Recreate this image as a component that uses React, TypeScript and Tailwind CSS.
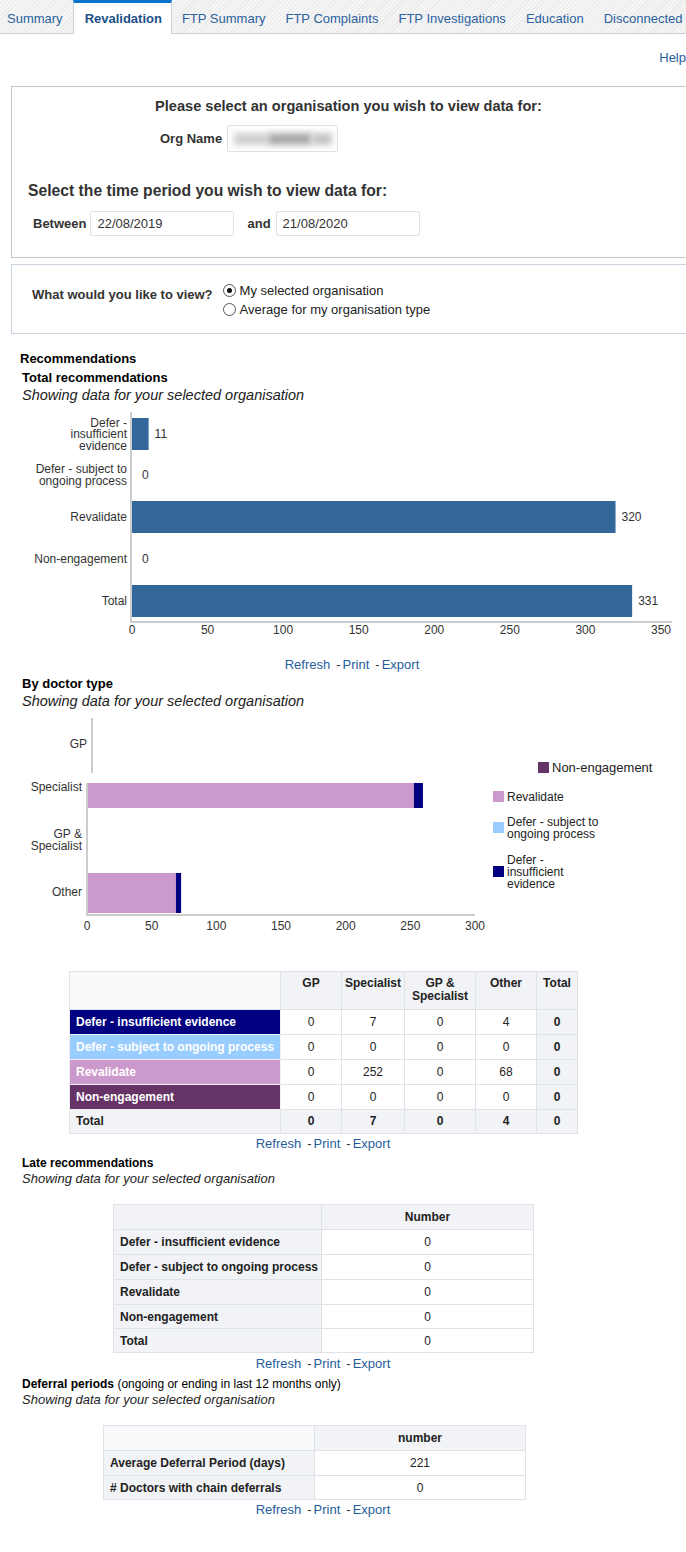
import React from 'react';

const tabs = ['Summary', 'Revalidation', 'FTP Summary', 'FTP Complaints', 'FTP Investigations', 'Education', 'Disconnected'];

function Links({ w }: { w: string }) {
  return (
    <div className={`${w} flex justify-center text-[13px] leading-[16px]`}>
      <a className="text-[#1f5d9c]">Refresh</a>
      <span className="ml-[6px] mr-[2px] text-[#333]">-</span>
      <a className="text-[#1f5d9c]">Print</a>
      <span className="ml-[6px] mr-[2px] text-[#333]">-</span>
      <a className="text-[#1f5d9c]">Export</a>
    </div>
  );
}

function Radio({ checked, label }: { checked?: boolean; label: string }) {
  return (
    <div className="flex h-[19px] items-center">
      <span className="flex h-[13px] w-[13px] items-center justify-center rounded-full border border-[#555] bg-white">
        {checked && <span className="h-[5px] w-[5px] rounded-full bg-[#111]" />}
      </span>
      <span className="ml-[4px] text-[13px] text-[#222]">{label}</span>
    </div>
  );
}

function TotalChart() {
  const k = 1.511;
  const rows = [
    { c: 29, v: 11, lines: ['Defer -', 'insufficient', 'evidence'] },
    { c: 70, v: 0, lines: ['Defer - subject to', 'ongoing process'] },
    { c: 112, v: 320, lines: ['Revalidate'] },
    { c: 154, v: 0, lines: ['Non-engagement'] },
    { c: 196, v: 331, lines: ['Total'] },
  ];
  return (
    <svg width="686" height="235" className="block">
      {rows.map((r, i) => (
        <g key={i}>
          {r.v > 0 && <rect x={132} y={r.c - 16} width={r.v * k} height={32} fill="#336699" />}
          <text x={r.v > 0 ? 132 + r.v * k + 6 : 142} y={r.c + 4} fontSize="12" fill="#333333">{r.v}</text>
          {r.lines.map((l, j) => (
            <text key={j} x={127} y={r.c + 4 + (j - (r.lines.length - 1) / 2) * 11.5} fontSize="12" fill="#333" textAnchor="end">{l}</text>
          ))}
        </g>
      ))}
      <line x1={131} y1={7} x2={131} y2={218} stroke="#cccccc" strokeWidth={2} />
      <line x1={130} y1={217} x2={672} y2={217} stroke="#cccccc" strokeWidth={2} />
      {[0, 50, 100, 150, 200, 250, 300, 350].map((t, i) => (
        <text key={t} x={132 + i * 75.57} y={229} fontSize="12" fill="#333" textAnchor="middle">{t}</text>
      ))}
    </svg>
  );
}

function DoctorChart() {
  const k = 1.2933;
  const legend = [
    { x: 538, y: 52, color: '#663366', lines: ['Non-engagement'], size: 13 },
    { x: 493, y: 81, color: '#cc99cc', lines: ['Revalidate'], size: 12 },
    { x: 493, y: 112, color: '#99ccff', lines: ['Defer - subject to', 'ongoing process'], size: 12 },
    { x: 493, y: 156, color: '#000080', lines: ['Defer -', 'insufficient', 'evidence'], size: 12 },
  ];
  return (
    <svg width="686" height="230" className="block">
      <line x1={92} y1={8} x2={92} y2={63} stroke="#cccccc" strokeWidth={2} />
      <text x={87} y={38} fontSize="12" fill="#333" textAnchor="end">GP</text>

      <rect x={88} y={73} width={252 * k} height={25} fill="#cc99cc" />
      <rect x={88 + 252 * k} y={73} width={7 * k} height={25} fill="#000080" />
      <text x={82} y={81} fontSize="12" fill="#333" textAnchor="end">Specialist</text>

      <text x={82} y={128} fontSize="12" fill="#333" textAnchor="end">GP &amp;</text>
      <text x={82} y={140} fontSize="12" fill="#333" textAnchor="end">Specialist</text>

      <rect x={88} y={163} width={68 * k} height={40} fill="#cc99cc" />
      <rect x={88 + 68 * k} y={163} width={4 * k} height={40} fill="#000080" />
      <text x={82} y={186} fontSize="12" fill="#333" textAnchor="end">Other</text>

      <line x1={87} y1={73} x2={87} y2={206} stroke="#cccccc" strokeWidth={2} />
      <line x1={86} y1={205} x2={475} y2={205} stroke="#cccccc" strokeWidth={2} />
      {[0, 50, 100, 150, 200, 250, 300].map((t, i) => (
        <text key={t} x={87 + i * 64.67} y={220} fontSize="12" fill="#333" textAnchor="middle">{t}</text>
      ))}

      {legend.map((l, i) => (
        <g key={i}>
          <rect x={l.x} y={l.y} width={11} height={11} fill={l.color} />
          {l.lines.map((t, j) => (
            <text key={j} x={l.x + 14} y={l.y + 10 + (j - (l.lines.length - 1) / 2) * 12} fontSize={l.size} fill="#222">{t}</text>
          ))}
        </g>
      ))}
    </svg>
  );
}

const typeRows = [
  { label: 'Defer - insufficient evidence', bg: 'bg-[#000080]', vals: [0, 7, 0, 4, 0] },
  { label: 'Defer - subject to ongoing process', bg: 'bg-[#99ccff]', vals: [0, 0, 0, 0, 0] },
  { label: 'Revalidate', bg: 'bg-[#cc99cc]', vals: [0, 252, 0, 68, 0] },
  { label: 'Non-engagement', bg: 'bg-[#663366]', vals: [0, 0, 0, 0, 0] },
];

const cell = 'border border-[#dfe3e8] text-center';

function TypeTable() {
  return (
    <table className="ml-[69px] mt-[31px] w-[508px] table-fixed border-collapse text-[12px] leading-[13px] text-[#222]">
      <colgroup>
        <col className="w-[211px]" />
        <col className="w-[61px]" />
        <col className="w-[63px]" />
        <col className="w-[71px]" />
        <col className="w-[61px]" />
        <col className="w-[41px]" />
      </colgroup>
      <thead>
        <tr className="h-[38px]">
          <th className="border border-[#dfe3e8] bg-[#f8f9fb]" />
          {['GP', 'Specialist', 'GP & Specialist', 'Other', 'Total'].map((h) => (
            <th key={h} className="border border-[#dfe3e8] bg-[#f1f3f6] px-0 pt-[5px] align-top font-bold">{h}</th>
          ))}
        </tr>
      </thead>
      <tbody>
        {typeRows.map((r) => (
          <tr key={r.label} className="h-[25px]">
            <td className={`border border-[#eef0f3] ${r.bg} whitespace-nowrap pl-[6px] text-left font-bold text-white`}>{r.label}</td>
            {r.vals.map((v, i) => (
              <td key={i} className={i === 4 ? `${cell} bg-[#f1f3f6] font-bold` : `${cell} bg-white`}>{v}</td>
            ))}
          </tr>
        ))}
        <tr className="h-[24px] bg-[#f1f3f6] font-bold">
          <td className="border border-[#dfe3e8] pl-[6px] text-left">Total</td>
          {[0, 7, 0, 4, 0].map((v, i) => (
            <td key={i} className={cell}>{v}</td>
          ))}
        </tr>
      </tbody>
    </table>
  );
}

function SimpleTable({ ml, head, rows, w1, w2, lightHead }: { ml: string; head: string; rows: [string, string][]; w1: string; w2: string; lightHead?: boolean }) {
  return (
    <table className={`${ml} mt-[17px] border-collapse text-[12px] leading-[14px] text-[#222]`}>
      <colgroup>
        <col className={w1} />
        <col className={w2} />
      </colgroup>
      <thead>
        <tr className="h-[25px]">
          <th className={lightHead ? 'border border-[#dfe3e8] bg-[#f8f9fb]' : 'border border-[#dfe3e8] bg-[#f1f3f6]'} />
          <th className="border border-[#dfe3e8] bg-[#f1f3f6] font-bold">{head}</th>
        </tr>
      </thead>
      <tbody>
        {rows.map(([a, b], i) => (
          <tr key={a} className={i < rows.length - 2 || i === 0 ? 'h-[25px]' : 'h-[24px]'}>
            <td className="border border-[#dfe3e8] bg-[#f1f3f6] pl-[6px] text-left font-bold">{a}</td>
            <td className="border border-[#dfe3e8] bg-white text-center">{b}</td>
          </tr>
        ))}
      </tbody>
    </table>
  );
}

export default function App() {
  return (
    <div className="w-[686px] overflow-hidden bg-white pb-[40px] font-['Liberation_Sans',Arial,sans-serif] text-[#222]">
      {/* tab strip */}
      <div className="flex h-[34px] border-b border-[#c9d0d8] bg-[repeating-linear-gradient(135deg,#f5f5f5_0px,#f5f5f5_2px,#eaeaea_2px,#eaeaea_3px)]">
        {tabs.map((t, i) =>
          t === 'Revalidation' ? (
            <div key={t} className="-mb-px flex h-[34px] shrink-0 items-center border-x border-t-[3px] border-x-[#c9d0d8] border-t-[#0572ce] bg-white pl-[11px] pr-[9px] pt-[1px] text-[13px] font-bold text-[#1c4f86]">
              {t}
            </div>
          ) : (
            <div key={t} className={`flex shrink-0 items-center pt-[4px] text-[13px] text-[#2b62a0] ${i === 0 ? 'pl-[7px] pr-[10px]' : 'px-[10px]'}`}>
              {t}
            </div>
          )
        )}
      </div>

      <div className="mt-[16px] flex justify-end text-[13px] leading-[16px] text-[#1f5d9c]">Help</div>

      {/* organisation panel */}
      <div className="ml-[11px] mt-[20px] h-[172px] w-[700px] border border-[#c6c6c6] text-[#333]">
        <div className="pl-[143px] pt-[10px] text-[14.6px] font-bold leading-[18px]">Please select an organisation you wish to view data for:</div>
        <div className="mt-[10px] flex h-[27px] items-center pl-[148px]">
          <span className="text-[13px] font-bold">Org Name</span>
          <div className="ml-[5px] flex h-[27px] w-[111px] items-center rounded-[2px] border border-[#dde2e8] bg-white pl-[6px]">
            <span className="h-[12px] w-[34px] bg-[#cfcfcf] blur-[3px]" />
            <span className="h-[12px] w-[44px] bg-[#a9a9a9] blur-[3px]" />
            <span className="h-[12px] w-[20px] bg-[#c4c4c4] blur-[3px]" />
          </div>
        </div>
        <div className="mt-[29px] pl-[16px] text-[15.7px] font-bold leading-[20px]">Select the time period you wish to view data for:</div>
        <div className="mt-[10px] flex h-[25px] items-center pl-[21px] text-[13px]">
          <span className="font-bold">Between</span>
          <div className="ml-[4px] flex h-[25px] w-[144px] items-center rounded-[2px] border border-[#dde2e8] pl-[6px]">22/08/2019</div>
          <span className="ml-[13px] font-bold">and</span>
          <div className="ml-[5px] flex h-[25px] w-[144px] items-center rounded-[2px] border border-[#dde2e8] pl-[6px]">21/08/2020</div>
        </div>
      </div>

      {/* view panel */}
      <div className="ml-[11px] mt-[6px] flex h-[70px] w-[700px] items-start border border-[#c8d3df] pl-[20px] pt-[16px]">
        <div className="mt-[6px] text-[13px] font-bold leading-[16px] text-[#333]">What would you like to view?</div>
        <div className="ml-[10px]">
          <Radio checked label="My selected organisation" />
          <Radio label="Average for my organisation type" />
        </div>
      </div>

      {/* recommendations */}
      <div className="ml-[20px] mt-[17px] text-[13px] font-bold leading-[16px] text-black">Recommendations</div>
      <div className="ml-[22px] mt-[3px] text-[13px] font-bold leading-[16px] text-black">Total recommendations</div>
      <div className="ml-[22px] mt-[1px] text-[14.5px] italic leading-[16px] text-[#222]">Showing data for your selected organisation</div>
      <div className="mt-[2px]">
        <TotalChart />
      </div>
      <Links w="mt-[17px] w-[704px]" />

      <div className="ml-[22px] mt-[3px] text-[13px] font-bold leading-[16px] text-black">By doctor type</div>
      <div className="ml-[22px] mt-[1px] text-[14.5px] italic leading-[16px] text-[#222]">Showing data for your selected organisation</div>
      <div className="mt-[1px]">
        <DoctorChart />
      </div>

      <TypeTable />
      <Links w="mt-[2px] w-[646px]" />

      <div className="ml-[22px] mt-[3px] text-[12px] font-bold leading-[16px] text-black">Late recommendations</div>
      <div className="ml-[22px] text-[13px] italic leading-[16px] text-[#222]">Showing data for your selected organisation</div>
      <SimpleTable
        ml="ml-[113px]"
        head="Number"
        w1="w-[208px]"
        w2="w-[212px]"
        rows={[
          ['Defer - insufficient evidence', '0'],
          ['Defer - subject to ongoing process', '0'],
          ['Revalidate', '0'],
          ['Non-engagement', '0'],
          ['Total', '0'],
        ]}
      />
      <Links w="mt-[3px] w-[646px]" />

      <div className="ml-[22px] mt-[4px] text-[12px] leading-[16px] text-black">
        <span className="font-bold">Deferral periods</span> (ongoing or ending in last 12 months only)
      </div>
      <div className="ml-[22px] text-[13px] italic leading-[16px] text-[#222]">Showing data for your selected organisation</div>
      <SimpleTable
        ml="ml-[103px]"
        head="number"
        w1="w-[211px]"
        w2="w-[211px]"
        lightHead
        rows={[
          ['Average Deferral Period (days)', '221'],
          ['# Doctors with chain deferrals', '0'],
        ]}
      />
      <Links w="mt-[2px] w-[646px]" />
    </div>
  );
}
